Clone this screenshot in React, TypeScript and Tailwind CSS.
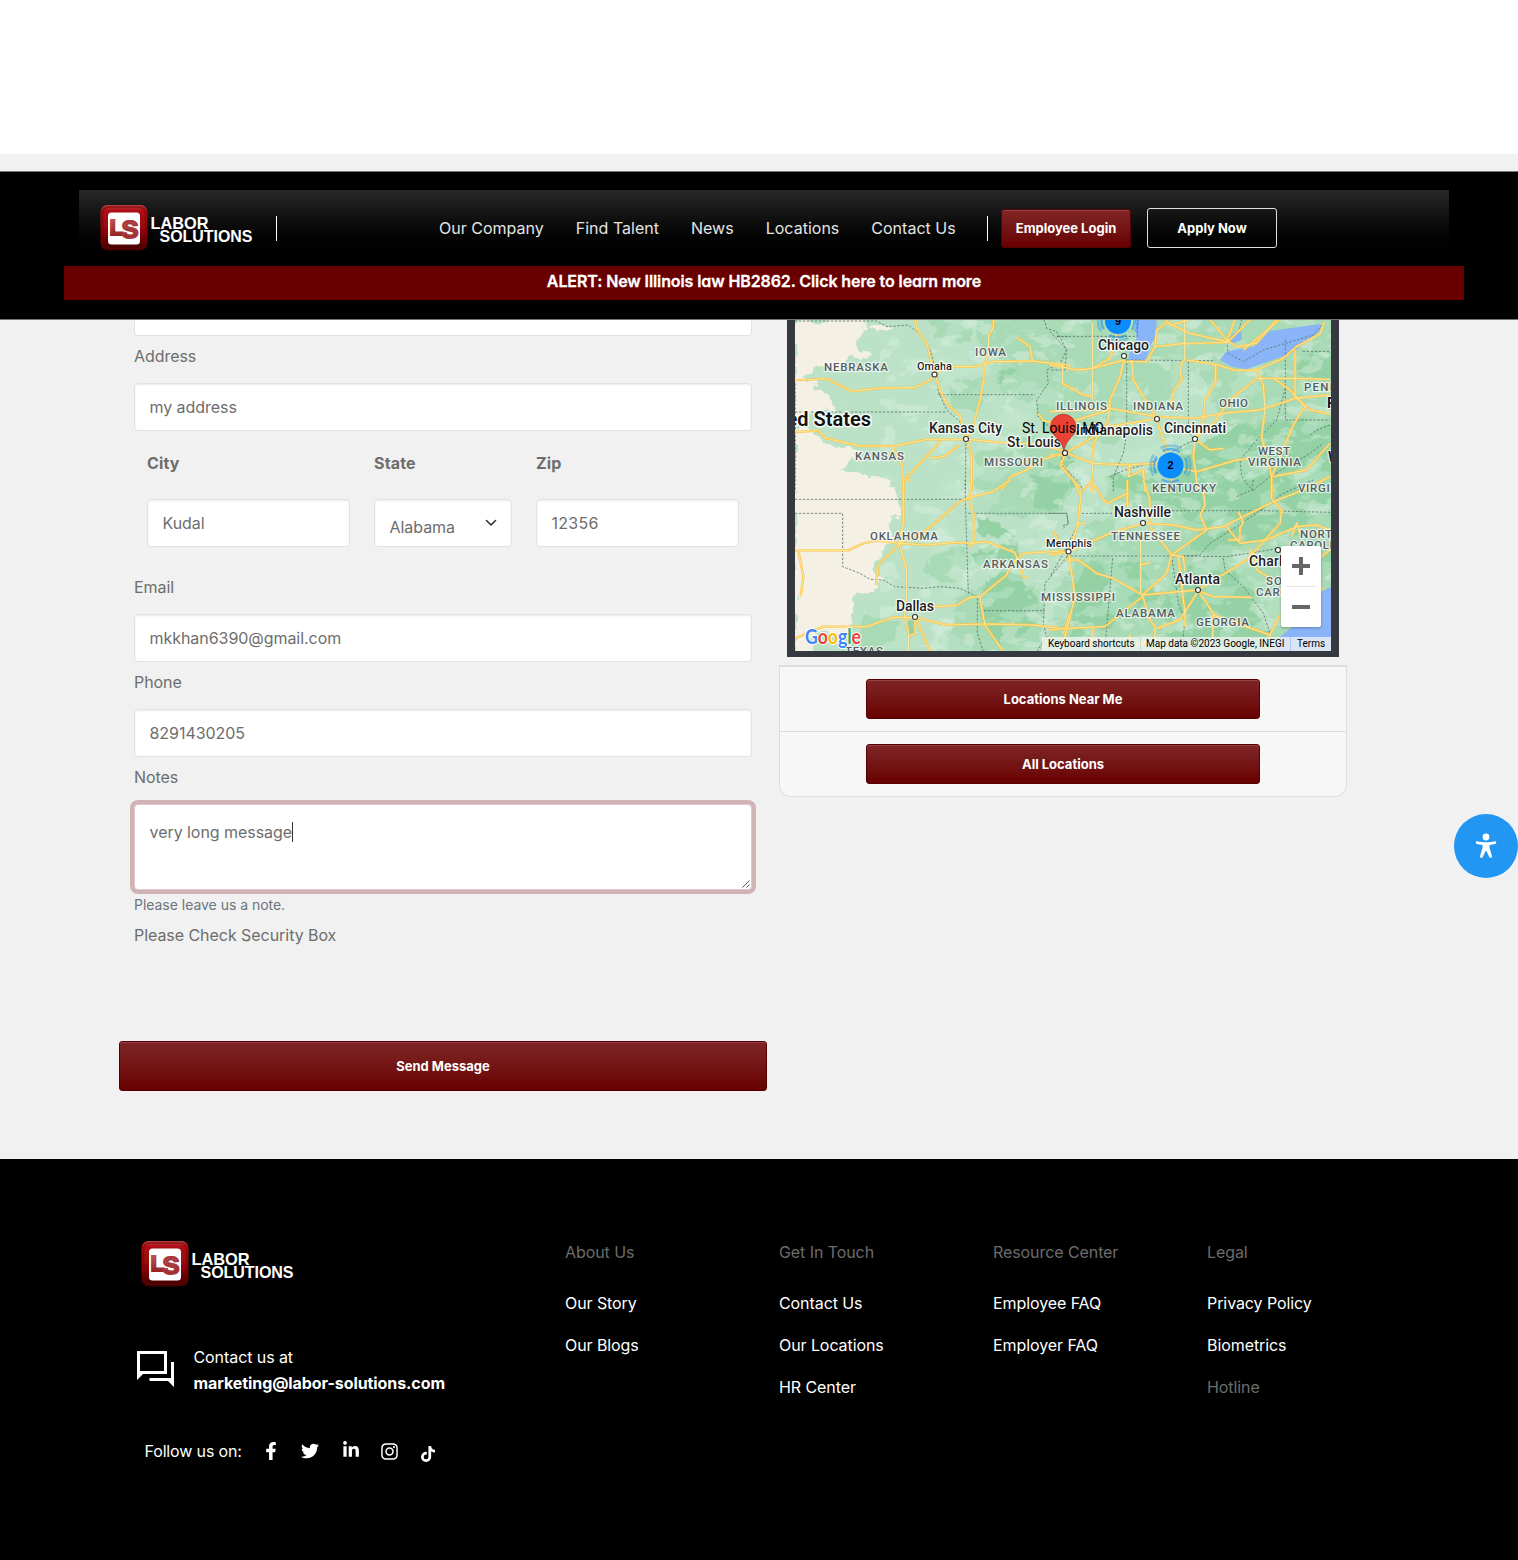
import React from "react";
import { FaFacebookF, FaTwitter, FaLinkedinIn, FaInstagram, FaTiktok } from "react-icons/fa";

function Logo({ id }: { id: string }) {
  const red = `${id}-red`;
  const letters = `${id}-letters`;
  const edge = `${id}-edge`;
  return (
    <svg width="160" height="56" viewBox="96 200 160 56" className="block shrink-0">
      <defs>
        <linearGradient id={red} x1="0" y1="0" x2="0" y2="1">
          <stop offset="0" stopColor="#b8423f" />
          <stop offset="0.12" stopColor="#b01015" />
          <stop offset="0.6" stopColor="#8c0408" />
          <stop offset="1" stopColor="#3a0001" />
        </linearGradient>
        <linearGradient id={letters} x1="0" y1="0" x2="0" y2="1">
          <stop offset="0" stopColor="#c4605e" />
          <stop offset="1" stopColor="#8e1418" />
        </linearGradient>
        <filter id={edge} x="-10%" y="-10%" width="120%" height="120%">
          <feGaussianBlur stdDeviation="0.6" />
        </filter>
      </defs>
      <rect x="100.5" y="205" width="47" height="45.5" rx="7" fill={`url(#${red})`} filter={`url(#${edge})`} />
      <rect x="102.5" y="207" width="43" height="41.5" rx="6" fill="none" stroke="#6d0003" strokeOpacity="0.55" strokeWidth="1.5" filter={`url(#${edge})`} />
      <rect x="108" y="212.5" width="32" height="32" rx="3.5" fill="#fff" />
      <g fontFamily="Liberation Sans, sans-serif" fontWeight="700">
        <text x="109.500" y="235" fontSize="22" textLength="14" lengthAdjust="spacingAndGlyphs" fill={`url(#${letters})`} stroke={`url(#${letters})`} strokeWidth="1.8">L</text>
        <text x="121.500" y="238" fontSize="24" textLength="17" lengthAdjust="spacingAndGlyphs" fill={`url(#${letters})`} stroke="#a5383a" strokeWidth="1.800">S</text>
      </g>
      <g fontFamily="Liberation Sans, sans-serif" fontWeight="700" fontSize="17" fill="#fff">
        <text x="150.5" y="228.5" textLength="58" lengthAdjust="spacingAndGlyphs">LABOR</text>
        <text x="159.5" y="242" textLength="93" lengthAdjust="spacingAndGlyphs">SOLUTIONS</text>
      </g>
    </svg>
  );
}

const redButton =
  "flex items-center justify-center rounded-[3px] border border-[#560004] bg-gradient-to-b from-[#7f2426] to-[#680000] pt-px text-[13px] font-bold text-white shadow-[inset_0_1px_0_rgba(255,255,255,0.15)]";

function Header() {
  const items = ["Our Company", "Find Talent", "News", "Locations", "Contact Us"];
  return (
    <header className="h-[149px] border-y border-[#777] bg-black pt-[18px]">
      <div className="mr-[69px] ml-[79px] flex h-[76px] items-start bg-gradient-to-b from-[#282828] to-black pl-[17px]">
        <div className="pt-[10px]">
          <Logo id="top" />
        </div>
        <div className="mt-[26px] ml-5 h-[25px] w-px bg-white" />
        <nav className="mt-[26px] ml-[162px] flex h-6 gap-8 text-base leading-6 tracking-[0.01px] whitespace-nowrap text-[#e4e4e4]">
          {items.map((item) => (
            <a key={item}>{item}</a>
          ))}
        </nav>
        <div className="mt-[26px] ml-auto h-[25px] w-px bg-white" />
        <a className={`${redButton} mt-[19px] ml-[13px] h-[39px] w-[130px]`}>Employee Login</a>
        <a className="mt-[18px] mr-[172px] ml-4 flex h-10 w-[130px] items-center justify-center rounded-[3px] border border-[#e0e0e0] pt-0.5 text-[13px] font-bold text-white">
          Apply Now
        </a>
      </div>
      <div className="mr-[54px] ml-16 flex h-[34px] justify-center bg-[#680000] pt-[3px] text-base leading-6 font-semibold text-white">
        <a className="whitespace-nowrap tracking-[-0.1px] [-webkit-text-stroke:0.3px_white] [font-feature-settings:'cv11']">
          ALERT: New Illinois law HB2862. Click here to learn more
        </a>
      </div>
    </header>
  );
}

/* Each tile covers a quarter of the map and is drawn at three units per pixel. */
const tiles = [
  {
    at: "translate(780 310) scale(0.33333)",
    roads: [
      "M45 211L140 206L215 244L300 234L405 233L450 210L464 192L500 170H585L640 155L755 153L835 162L870 166",
      "M405 28L412 60L440 100L464 190L480 240L500 280L540 318L558 386L575 430V545",
      "M640 28V52L626 78V130L612 170V210L600 270L580 345L558 386",
      "M710 82L750 110L758 153", "M848 165V222L870 230",
      "M45 366L115 362L135 384L240 408H345L440 388H560L690 400H770L854 424",
      "M485 390L370 514", "M540 405L490 440L450 444", "M340 415L368 470L370 545",
      "M854 428L790 448L740 480L692 500L665 540", "M854 428L845 460L870 500",
      "M775 310L790 332L830 340", "M825 162L848 170L848 200",
    ],
    borders: [
      "M45 33H290L320 50L385 45L425 75L450 120L470 190L475 245L500 300L540 335L558 386L556 545",
      "M475 254H765", "M45 306H500", "M792 28L800 55L830 65L860 120L840 160L800 180L805 220L770 270L775 320L830 370L870 450",
      "M832 80H870", "M46 220V545",
    ],
    greens: [
      "M450 30L580 40L570 100L470 90Z", "M580 28H870V540H600L590 440L680 410L790 360L770 270L640 250L600 300L510 290L500 230L620 200L600 100Z",
    ],
    dark: ["M740 500L870 450V545H690Z", "M640 175L700 190L670 220Z"],
    cream: [
      "M45 28L260 28L245 65L230 100L280 140L205 145L180 175L100 175L75 195L130 250L170 300L100 310L75 330L45 350Z",
      "M45 358L120 375L135 400L205 420L250 440L190 465L245 490L335 515L325 545H45Z",
      "M260 50L320 38L330 60L285 68Z",
    ],
    water: [],
  },
  {
    at: "translate(1050 310) scale(0.33333)",
    roads: [
      "M0 165L35 170L80 180L130 175L222 150", "M38 165V220L100 255L128 260", "M127 38V270",
      "M128 175L180 145L198 90V28", "M222 150L210 200L180 270L175 330L130 400L125 545",
      "M222 155L290 155L315 110L405 100L530 98", "M315 110L320 60L350 38L420 70L530 95L555 28",
      "M404 28V148L390 170L395 210L370 245L363 285", "M245 150L250 210L320 326L350 420L365 520",
      "M410 150L495 163L560 182L620 180L700 145L740 110L810 72L822 38",
      "M497 165V215L465 270L460 330L435 388L430 440L445 545", "M0 305L180 295L320 320L430 325L535 308L630 300L735 265L840 255",
      "M435 385L495 335L540 270L620 205L720 205L840 208", "M620 180L640 225L645 300L635 380L665 500L670 545",
      "M735 120V260L780 300L840 312", "M670 205L720 240L765 290L730 345L690 440L665 500",
      "M45 428L100 400L175 350L320 326", "M45 428L130 460L235 465L310 460L365 470L440 485L560 450L600 445",
      "M0 435H45L30 465L90 535", "M480 28L530 90L560 110L620 100L680 28", "M600 28L555 75L530 98",
      "M840 400L770 480L670 500", "M0 340L80 330L175 300", "M435 388L480 420L520 415", "M345 28L365 45L420 28",
      "M240 460L235 500L280 480L285 545", "M690 28L640 70L580 120",
    ],
    borders: [
      "M20 79H262V28", "M230 148V370L220 430L190 500V545", "M230 150L495 152", "M415 155V365L440 400",
      "M0 65L50 120L45 180L0 180", "M575 28L565 70L530 95L535 130L580 155L640 120L790 75L820 40",
      "M706 90V330H840", "M758 124H840", "M706 235L680 330L620 390L570 450L575 500L610 545",
      "M440 390L410 400L360 430L300 460L225 480L180 500", "M35 430V465L90 520L100 545", "M780 375L800 360L840 345",
      "M610 540L660 500L780 430L820 400",
    ],
    greens: [
      "M-20 10H860V420L620 400L500 300L440 170L300 320L240 330L200 400L40 380L-20 320Z",
    ],
    dark: [
      "M440 400L560 350L700 330L860 350V560H160L260 500L340 450Z", "M740 150L860 130V260L770 220Z",
      "M-10 460L90 500L60 545H-10Z",
    ],
    cream: [],
    water: [
      "M254 28H319L319 75L300 110L290 145L255 160L235 150L240 120L260 85Z",
      "M510 150L528 125L560 118L610 110L660 62L720 55L810 42L815 58L725 130L640 160L590 178L545 170Z",
      "M530 95L550 70L575 65V90L545 100Z",
    ],
  },
  {
    at: "translate(780 480) scale(0.33333)",
    roads: [
      "M370 0V130L358 190L380 270V350L372 400L385 455V515", "M370 0L395 0", "M575 0L568 55L582 110V180L570 205",
      "M358 190L440 150L540 65L570 52L640 35L690 0", "M45 211H205L250 190L290 182L358 190L440 195L530 187L570 190L620 185L705 218L730 290L740 295",
      "M358 192L295 255L288 315", "M55 211L70 290L62 350", "M45 475L130 440L260 440L340 412H405L500 435L615 432L760 435L870 448",
      "M405 410V460L385 470V515", "M405 410L430 465L450 515", "M405 385L460 380L530 376L570 352L600 350L680 285L690 260L730 220L870 212",
      "M600 350L608 400L615 435L670 515", "M820 155L840 190L870 205", "M870 400L850 460",
    ],
    borders: [
      "M45 58H556V0", "M45 100H188V260L240 280L270 298L310 300L345 320L430 325L480 320L540 325L592 350V460L610 515",
      "M565 100L860 100L865 130L845 140", "M556 58L565 340", "M600 392H795", "M870 220L820 280L795 310L790 430L800 470L770 515",
    ],
    greens: [
      "M600 -10H880V45L810 110L700 110L575 100L585 40Z", "M460 220L560 200V290L510 310L440 280Z",
      "M530 350L630 310L780 330L790 515H500Z", "M260 410L350 420L340 480L270 515H210Z",
    ],
    dark: [
      "M760 -10H870V30L810 90L760 70Z", "M610 310L690 270L760 350L735 400L765 420L720 480L640 490L600 400Z",
      "M570 220L700 190L720 240L600 260Z", "M575 115L650 125L700 180L600 170Z", "M370 430L410 430L400 460Z",
    ],
    cream: [
      "M45 0H320L350 40L355 100L330 150L358 185L285 230L280 270L312 285L290 330L235 340L215 400L210 460L110 465L95 515H45Z",
    ],
    water: [],
  },
  {
    at: "translate(1050 480) scale(0.33333)",
    roads: [
      "M0 225L55 215L180 160L279 130L370 135L440 150L520 140L670 65L760 30L840 -10", "M70 0L92 45L85 130L56 215L75 350L45 470L35 515",
      "M45 240H85L140 280L190 295L277 345L300 420L315 440V515", "M272 175V340", "M272 255L300 248", "M277 345L350 280L365 225L300 140",
      "M405 275L400 230L365 225L470 150L450 105L465 75L460 35", "M277 345L445 330L590 240L690 130L695 90L665 55V-10",
      "M277 350L165 440L50 445L0 450", "M445 332L490 400L487 515", "M445 332L390 420L320 445", "M445 332L490 350L605 352",
      "M490 405L660 465L690 405", "M530 140L570 190L650 180L740 140L800 135L840 150", "M535 180H570V145L580 125L565 95",
      "M240 465L235 500L300 485", "M300 60L280 0", "M300 60V130", "M232 0V80", "M232 40L170 70L120 0", "M80 130H105", "M600 205L620 270L670 300",
      "M725 170L740 130L750 160", "M840 210L790 250V300L820 330", "M85 45L130 0", "M385 230L405 400V440", "M660 465L650 515", "M130 445L120 515",
    ],
    borders: [
      "M0 100H50L55 130L40 145", "M95 100H279", "M330 92H640L840 97", "M50 228H400L530 230", "M400 228L450 225L480 190L560 140L640 85L670 60L700 40L790 0",
      "M530 230L690 205", "M520 235L525 270L580 320L640 400L660 460", "M188 235L165 500", "M365 228L385 370L405 420L395 515",
      "M85 130L40 220L0 290", "M610 0L605 30L560 50",
    ],
    greens: ["M150 -10H860V330L680 520H-20L0 440L60 260L100 150L200 100Z"],
    dark: [
      "M150 -10H860V100L640 180L400 220L470 130L300 60Z", "M120 240L270 250L330 350L170 440L60 480L60 340Z", "M420 260L590 280L660 460L630 500L420 515L350 470L330 370Z",
      "M700 150L860 170V250L720 240Z",
    ],
    cream: [],
    water: ["M845 320L815 335L780 390L740 430L690 470L675 515H845Z"],
  },
];

const cities: [string, number, number, number, number, number, number, number][] = [
  ["Omaha", 917, 369.5, 35, 11, 500, 934.5, 374.5],
  ["Kansas City", 929, 433, 73, 14, 500, 966, 439],
  ["St. Louis", 1007, 447, 54, 14, 500, 1065, 453],
  ["Chicago", 1098, 350, 51, 14, 500, 1124, 356],
  ["Indianapolis", 1076, 435, 77, 14, 500, 1157, 419],
  ["Cincinnati", 1164, 433, 62, 14, 500, 1195, 439],
  ["Nashville", 1114, 517, 57, 14, 500, 1143, 523],
  ["Memphis", 1046, 547, 46, 11, 500, 1068.5, 551.5],
  ["Atlanta", 1175, 584, 45, 14, 500, 1198, 590],
  ["Dallas", 896, 611, 38, 14, 500, 915, 617],
  ["Charlotte", 1249, 566, 59, 14, 500, 1278, 550],
];

const states: [string, number, number, number][] = [
  ["NEBRASKA", 824, 371, 64], ["IOWA", 975, 356, 31], ["KANSAS", 855, 460, 49], ["MISSOURI", 984, 466, 59],
  ["ILLINOIS", 1056, 410, 51], ["INDIANA", 1133, 410, 50], ["OHIO", 1219, 407, 29], ["PENNSYLVANIA", 1304, 391, 97],
  ["WEST", 1258, 455, 32], ["VIRGINIA", 1248, 466, 53], ["KENTUCKY", 1152, 492, 64], ["VIRGINIA", 1298, 492, 53],
  ["OKLAHOMA", 870, 540, 68], ["TENNESSEE", 1111, 540, 69], ["ARKANSAS", 983, 568, 65], ["MISSISSIPPI", 1041, 601, 74],
  ["ALABAMA", 1116, 617, 59], ["GEORGIA", 1196, 626, 53], ["TEXAS", 845, 655, 38], ["NORTH", 1300, 538, 41],
  ["CAROLINA", 1290, 549, 60], ["SOUTH", 1266, 585, 42], ["CAROLINA", 1256, 596, 60],
];

function Cluster({ x, y, n }: { x: number; y: number; n: string }) {
  return (
    <g>
      <circle cx={x} cy={y} r="20" fill="none" stroke="#1a8cf0" strokeOpacity="0.35" strokeWidth="2.5" strokeDasharray="22 9.4" strokeDashoffset="11" />
      <circle cx={x} cy={y} r="16.5" fill="none" stroke="#1a8cf0" strokeOpacity="0.55" strokeWidth="2.5" strokeDasharray="18 8" strokeDashoffset="9" />
      <circle cx={x} cy={y} r="13" fill="#0a8cff" />
      <text x={x} y={y + 3.8} textAnchor="middle" fontFamily="Liberation Sans, sans-serif" fontWeight="700" fontSize="11" fill="#000">{n}</text>
    </g>
  );
}

function MapCanvas() {
  return (
    <svg width="536" height="331" viewBox="795 320 536 331" className="block">
      <defs>
        <filter id="patches" x="0" y="0" width="100%" height="100%">
          <feTurbulence type="fractalNoise" baseFrequency="0.03 0.045" numOctaves="5" seed="8" />
          <feColorMatrix values="0 0 0 0 0.58  0 0 0 0 0.82  0 0 0 0 0.66  14 0 0 0 -7.6" />
        </filter>
        <filter id="clearings" x="0" y="0" width="100%" height="100%">
          <feTurbulence type="fractalNoise" baseFrequency="0.04 0.06" numOctaves="5" seed="21" />
          <feColorMatrix values="0 0 0 0 0.74  0 0 0 0 0.89  0 0 0 0 0.78  0 14 0 0 -8.4" />
        </filter>
        <filter id="rough" x="-5%" y="-5%" width="110%" height="110%">
          <feTurbulence type="fractalNoise" baseFrequency="0.02" numOctaves="4" seed="3" />
          <feDisplacementMap in="SourceGraphic" scale="60" xChannelSelector="R" yChannelSelector="G" />
        </filter>
      </defs>
      <rect x="795" y="320" width="536" height="331" fill="#bbe2c6" />
      {tiles.map((t) => (
        <g key={t.at} transform={t.at} filter="url(#rough)">
          {t.greens.map((d) => <path key={d} d={d} fill="#a8dab5" />)}
          {t.dark.map((d) => <path key={d} d={d} fill="#94d2a5" />)}
        </g>
      ))}
      <rect x="930" y="320" width="401" height="331" filter="url(#patches)" opacity="0.4" />
      <rect x="880" y="320" width="451" height="331" filter="url(#clearings)" opacity="0.4" />
      {tiles.map((t) => (
        <g key={t.at} transform={t.at}>
          <g filter="url(#rough)">{t.cream.map((d) => <path key={d} d={d} fill="#f5f0e4" />)}</g>
          {t.water.map((d) => <path key={d} d={d} fill="#8ab4f8" />)}
        </g>
      ))}
      {tiles.map((t) => (
        <g key={t.at} transform={t.at} fill="none" strokeLinejoin="round">
          {t.borders.map((d) => <path key={d} d={d} stroke="#5f7773" strokeWidth="2.6" strokeDasharray="7 5" />)}
          {t.roads.map((d) => <path key={d} d={d} stroke="#fac54a" strokeWidth="7.2" />)}
          {t.roads.map((d) => <path key={d} d={d} stroke="#fff0b0" strokeWidth="2.4" />)}
        </g>
      ))}
      <Cluster x={1118} y={321} n="9" />
      <Cluster x={1170.5} y={465.5} n="2" />
      <g fontFamily="Roboto, sans-serif" paintOrder="stroke" stroke="#fff" strokeLinejoin="round">
        {states.map(([name, x, y, w]) => (
          <text key={name + x} x={x} y={y} fontSize="11.5" fontWeight="500" fill="#555d60" textLength={w} strokeOpacity="0.7" strokeWidth="2.4">{name}</text>
        ))}
        {cities.map(([name, x, y, w, size, weight]) => (
          <text key={name} x={x} y={y} fontSize={size} fontWeight={weight} fill="#202124" textLength={w} strokeOpacity="0.85" strokeWidth="2.6">{name}</text>
        ))}
        <text x="871" y="426" textAnchor="end" fontSize="20" fontWeight="600" fill="#111" strokeOpacity="0.9" strokeWidth="3">United States</text>
        <text x="1327" y="408" fontSize="14" fontWeight="700" fill="#111" strokeWidth="2">P</text>
        <text x="1328" y="462" fontSize="14" fontWeight="700" fill="#111" strokeWidth="2">W</text>
      </g>
      {cities.map(([name, , , , , , cx, cy]) => (
        <circle key={name} cx={cx} cy={cy} r="2.5" fill="#fff" stroke="#333" strokeWidth="1.1" />
      ))}
      <path d="M1064 451C1062.5 439 1050.500 436 1050.500 427A12.750 12.750 0 0 1 1076 427C1076 436 1065.500 439 1064 451Z" fill="#ea4335" stroke="#c5221f" strokeWidth="0.7" />
      <text x="1022" y="433" fontFamily="Roboto, sans-serif" fontSize="14" textLength="82" fill="#000">St. Louis, MO</text>
      <circle cx="1065" cy="453" r="2.5" fill="#fff" stroke="#333" strokeWidth="1.1" />
      <g fontFamily="Lato, sans-serif" fontSize="20.5" stroke="#fff" strokeWidth="2" paintOrder="stroke" strokeLinejoin="round" fontWeight="700">
        <text x="805" y="643.500" textLength="56" lengthAdjust="spacingAndGlyphs">
          <tspan fill="#4285f4">G</tspan><tspan fill="#ea4335">o</tspan><tspan fill="#fbbc05">o</tspan>
          <tspan fill="#4285f4">g</tspan><tspan fill="#34a853">l</tspan><tspan fill="#ea4335">e</tspan>
        </text>
      </g>
    </svg>
  );
}

function MapPanel() {
  return (
    <div className="w-[568px]">
      <div className="relative mx-2 h-[337px] bg-[#363a40] px-2">
        <MapCanvas />
        <div className="absolute right-[18px] bottom-[30px] flex h-[81px] w-10 flex-col items-center rounded-[2px] bg-white shadow-[0_1px_3px_rgba(0,0,0,0.3)]">
          <div className="flex h-10 items-center">
            <svg width="18" height="18" viewBox="0 0 18 18" fill="#666"><path d="M7 0h4v7h7v4h-7v7H7v-7H0V7h7z" /></svg>
          </div>
          <div className="h-px w-[30px] bg-[#e6e6e6]" />
          <div className="flex h-10 items-center">
            <svg width="18" height="4" viewBox="0 0 18 4" fill="#666"><path d="M0 0h18v4H0z" /></svg>
          </div>
        </div>
        <div className="absolute right-2 bottom-[6px] flex h-[14px] items-center bg-[#f5f5f5]/75 font-[Roboto,sans-serif] text-[10px] leading-[14px] whitespace-nowrap text-black">
          <span className="w-[99px] border-r border-black/10 pl-[6px]">Keyboard shortcuts</span>
          <span className="w-[150px] border-r border-[#8ab4f8]/60 pl-[5px]">Map data ©2023 Google, INEGI</span>
          <span className="w-10 pl-[6px]">Terms</span>
        </div>
      </div>
      <div className="mt-2 h-[132px] rounded-b-xl border border-t-2 border-[#dedede] bg-[#f7f7f7]">
        <div className="flex h-[65px] items-center justify-center border-b border-[#dedede]">
          <a className={`${redButton} h-10 w-[394px]`}>Locations Near Me</a>
        </div>
        <div className="flex h-[64px] items-center justify-center">
          <a className={`${redButton} h-10 w-[394px]`}>All Locations</a>
        </div>
      </div>
    </div>
  );
}

const field =
  "block h-12 w-full rounded-[4px] border border-[#e2e2e2] bg-white px-[14.5px] text-base text-[#6d6d6d] outline-none tracking-[-0.05px] shadow-[inset_0_1px_2px_rgba(0,0,0,0.075)]";

function Field({ label, value }: { label: string; value: string }) {
  return (
    <div className="h-[95px]">
      <label className="block h-[39px] leading-6">{label}</label>
      <input className={field} defaultValue={value} />
    </div>
  );
}

function ContactForm() {
  return (
    <form className="w-[648px] text-base tracking-[-0.05px] text-[#6d6d6d]">
      <div className="px-[15px]">
        <div className="mb-2 h-4 rounded-b-[4px] border border-t-0 border-[#e2e2e2] bg-white" />
        <Field label="Address" value="my address" />
        <div className="flex gap-6 px-[13px] pt-3">
          <div className="w-[203px]">
            <label className="block h-12 leading-6 font-bold tracking-[0.15px]">City</label>
            <input className={field} defaultValue="Kudal" />
          </div>
          <div className="w-[138px]">
            <label className="block h-12 leading-6 font-bold tracking-[0.15px]">State</label>
            <div className={`${field} relative pt-[15px]`}>
              Alabama
              <svg className="absolute top-[18px] right-[14px]" width="12" height="10" viewBox="0 0 12 10" fill="none" stroke="#333" strokeWidth="1.6" strokeLinecap="round" strokeLinejoin="round"><path d="M1.500 2.500l4.500 4.500 4.500-4.500" /></svg>
            </div>
          </div>
          <div className="w-[203px]">
            <label className="block h-12 leading-6 font-bold tracking-[0.15px]">Zip</label>
            <input className={`${field} tracking-[0.25px]`} defaultValue="12356" />
          </div>
        </div>
        <div className="pt-7">
          <Field label="Email" value="mkkhan6390@gmail.com" />
          <Field label="Phone" value="8291430205" />
        </div>
        <label className="block h-[39px] leading-6">Notes</label>
        <div className="relative flex h-[86px] rounded-[4px] border border-[#e0c8c8] bg-white px-[14.5px] pt-[15px] leading-6 shadow-[0_0_0_4px_#d0b4b5]">
          <span>very long message</span>
          <span className="mt-0.5 h-5 w-px bg-[#333]" />
          <svg className="absolute right-px bottom-px" width="8" height="8" viewBox="0 0 8 8" stroke="#444" strokeWidth="0.9"><path d="M0.500 7.500l7-7M4.500 7.500l3-3" /></svg>
        </div>
        <p className="mt-[5px] text-sm leading-5 tracking-[-0.03px] text-[#6c757d]">Please leave us a note.</p>
        <p className="mt-2 leading-6">Please Check Security Box</p>
      </div>
      <a className={`${redButton} mt-[94px] h-[50px] w-full tracking-normal`}>Send Message</a>
    </form>
  );
}

const columns = [
  { title: "About Us", links: ["Our Story", "Our Blogs"] },
  { title: "Get In Touch", links: ["Contact Us", "Our Locations", "HR Center"] },
  { title: "Resource Center", links: ["Employee FAQ", "Employer FAQ"] },
  { title: "Legal", links: ["Privacy Policy", "Biometrics", "Hotline"] },
];

function Footer() {
  return (
    <footer className="flex h-[401px] bg-black text-base tracking-[-0.08px] text-white">
      <div className="w-[565px] pt-[77px] pl-[137px]">
        <Logo id="bottom" />
        <div className="mt-[52px] flex">
          <svg className="mt-[7px]" width="37" height="36" viewBox="0 0 37 36" fill="#fff">
            <path fillRule="evenodd" d="M0 0h30v23H6l-6 6zM3 3h24v17H3z" />
            <path d="M34 11h3v25l-6-6H12.500v-3H34z" />
          </svg>
          <div className="ml-[19.5px] leading-[26px]">
            <div>Contact us at</div>
            <div className="font-bold">marketing@labor-solutions.com</div>
          </div>
        </div>
        <div className="mt-[43px] flex h-6 items-center pl-[7.5px]">
          <span className="w-[118px] tracking-[-0.14px]">Follow us on:</span>
          <FaFacebookF size={18} className="-mt-px w-4" />
          <FaTwitter size={18} className="ml-[22px]" />
          <FaLinkedinIn size={18} className="-mt-0.5 ml-[23px]" />
          <FaInstagram size={19} className="ml-5" />
          <FaTiktok size={16} className="mt-1.5 ml-[21px]" />
        </div>
      </div>
      {columns.map((column) => (
        <div key={column.title} className="w-[214px] pt-[81px] leading-6">
          <div className="mb-[27px] text-[#6c6c6c]">{column.title}</div>
          {column.links.map((link) => (
            <a key={link} className={link === "Hotline" ? "mb-[18px] block text-[#6c6c6c]" : "mb-[18px] block"}>{link}</a>
          ))}
        </div>
      ))}
    </footer>
  );
}

export default function App() {
  return (
    <div className="relative h-[1560px] w-[1518px] overflow-hidden bg-[#f1f1f1] font-[Inter,sans-serif]">
      <div className="h-[154px] bg-white" />
      <div className="h-[17px]" />
      <Header />
      <main className="flex h-[839px] gap-3 pl-[119px]">
        <ContactForm />
        <MapPanel />
      </main>
      <Footer />
      <button className="absolute top-[814px] right-0 flex h-16 w-16 items-center justify-center rounded-full bg-[#2196f3]">
        <svg width="22" height="26" viewBox="0 0 22 26" fill="#fff">
          <circle cx="11" cy="4" r="3.400" />
          <path d="M2 8.300c3 .8 6 1 9 1s6-.2 9-1c1.500-.3 1.800 2.200.3 2.600l-5.800 1.100v3l2.500 8c.5 1.700-2 2.500-2.700.9L11.400 18h-.8l-2.900 5.900c-.7 1.600-3.200.8-2.700-.9l2.500-8v-3L1.700 10.900C.2 10.500.5 8 2 8.300z" />
        </svg>
      </button>
    </div>
  );
}
